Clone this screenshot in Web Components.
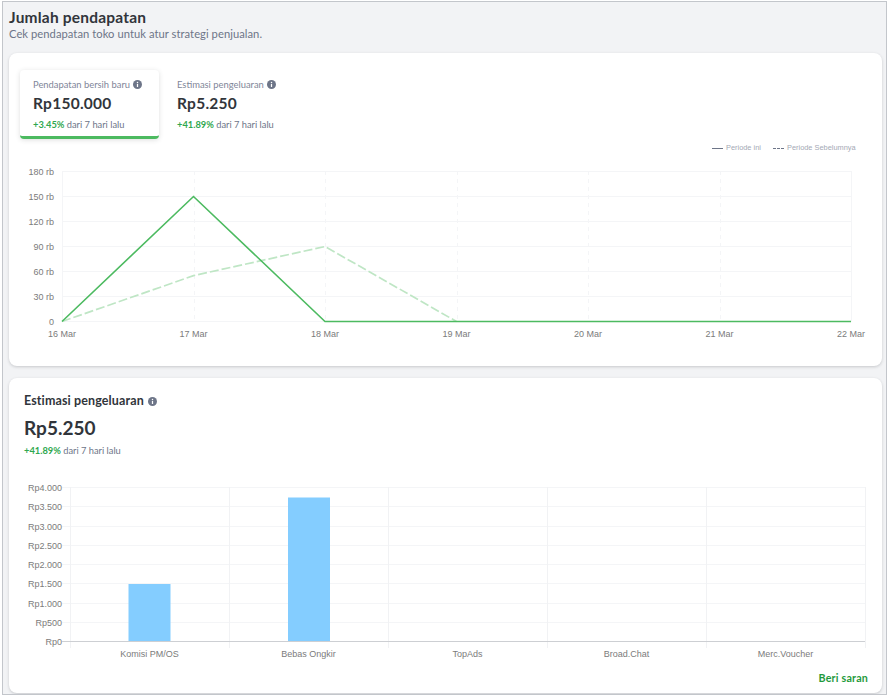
<!DOCTYPE html>
<html lang="id">
<head>
<meta charset="utf-8">
<title>Jumlah pendapatan</title>
<style>
    html, body { margin: 0; padding: 0; background: #fff; }
    body { font-family: "Noto Sans", "Open Sans", sans-serif; }
</style>
</head>
<body>

<template id="income-page-template">
    <style>
        :host {
            display: block;
            box-sizing: border-box;
            width: 885px;
            height: 694px;
            margin: 1px 0 0 2px;
            padding: 7px 4px 0 6px;
            background: #f2f3f5;
            border: 1px solid #c3c6cb;
            overflow: hidden;
        }
        h1 { margin: 0; font-size: 15.5px; line-height: 16px; font-weight: 700; color: #31353b; font-family: "Lato", sans-serif; letter-spacing: .2px; }
        p { margin: 1px 0 0; font-size: 11.2px; line-height: 15px; color: #6d7588; font-family: "Lato", sans-serif; letter-spacing: .05px; }
        .cards { display: flex; flex-direction: column; gap: 12px; margin-top: 12px; }
    </style>
    <h1><slot name="title"></slot></h1>
    <p><slot name="subtitle"></slot></p>
    <div class="cards"><slot></slot></div>
</template>

<template id="white-card-template">
    <style>
        :host {
            display: block;
            box-sizing: border-box;
            background: #fff;
            border-radius: 8px;
            box-shadow: 0 1px 3px rgba(49, 53, 59, .22);
        }
    </style>
    <slot></slot>
</template>

<template id="info-dot-template">
    <style>
        :host { display: inline-flex; vertical-align: -1px; margin-left: 1px; }
        svg { display: block; width: var(--dot-size, 9px); height: var(--dot-size, 9px); }
    </style>
    <svg viewBox="0 0 16 16"><circle cx="8" cy="8" r="8" fill="#6d7588"/><rect x="6.9" y="7" width="2.2" height="5.4" fill="#fff"/><circle cx="8" cy="4.6" r="1.3" fill="#fff"/></svg>
</template>

<template id="delta-line-template">
    <style>
        :host { display: block; font-family: "Lato", sans-serif; font-size: 9.3px; line-height: 12px; color: #6d7588; white-space: nowrap; }
        b { color: #2fa84f; font-weight: 700; }
    </style>
    <b><slot></slot></b> dari 7 hari lalu
</template>

<template id="metric-tab-template">
    <style>
        :host {
            display: block;
            box-sizing: border-box;
            width: 139px;
            height: 69px;
            padding: 9px 0 0 13px;
            font-family: "Lato", sans-serif;
            border-radius: 4px;
        }
        :host([active]) {
            box-shadow: 0 1px 5px rgba(49, 53, 59, .16);
            border-bottom: 3px solid #4cba60;
        }
        .label { font-size: 9.4px; line-height: 12px; color: #7f8699; white-space: nowrap; }
        .value { margin-top: 2px; font-size: 15.5px; line-height: 20px; font-weight: 700; color: #31353b; letter-spacing: .25px; }
        delta-line { margin-top: 6px; }
    </style>
    <div class="label"><slot name="label"></slot> <info-dot></info-dot></div>
    <div class="value"><slot name="value"></slot></div>
    <delta-line><slot name="delta"></slot></delta-line>
</template>

<template id="line-chart-template">
    <style>
        :host { display: block; }
        svg { display: block; }
        text { font-family: "Liberation Sans", Arial, sans-serif; font-size: 9px; fill: #7b7b7b; }
        .legend { font-size: 7.4px; fill: #a4a9b5; }
    </style>
    <svg id="plot" width="873" height="227" viewBox="9 139 873 227"></svg>
</template>

<template id="bar-chart-template">
    <style>
        :host { display: block; }
        svg { display: block; }
        text { font-family: "Liberation Sans", Arial, sans-serif; font-size: 9px; fill: #7b7b7b; }
    </style>
    <svg id="plot" width="873" height="190" viewBox="9 480 873 190"></svg>
</template>

<template id="income-summary-template">
    <style>
        :host { display: block; height: 313px; padding: 17px 0 0 11px; box-sizing: border-box; }
        .tabs { display: flex; gap: 5px; }
        line-chart { margin-left: -11px; }
    </style>
    <div class="tabs"><slot></slot></div>
    <line-chart></line-chart>
</template>

<template id="expense-detail-template">
    <style>
        :host { display: block; height: 315px; padding: 16px 0 0 15px; box-sizing: border-box; font-family: "Lato", sans-serif; position: relative; }
        h2 { margin: 0; font-size: 12.5px; line-height: 14px; font-weight: 700; color: #31353b; letter-spacing: .12px; }
        .value { margin-top: 8px; font-size: 19px; line-height: 24px; font-weight: 700; color: #31353b; }
        delta-line { margin-top: 5px; }
        bar-chart { margin: 23px 0 0 -15px; }
        a { position: absolute; right: 14px; bottom: 8px; font-size: 10.7px; line-height: 14px; font-weight: 700; color: #1f9a3c; letter-spacing: .2px; text-decoration: none; }
    </style>
    <h2><slot name="title"></slot> <info-dot></info-dot></h2>
    <div class="value"><slot name="value"></slot></div>
    <delta-line><slot name="delta"></slot></delta-line>
    <bar-chart></bar-chart>
    <a href="#"><slot name="link"></slot></a>
</template>

<script>
const SVG_NS = 'http://www.w3.org/2000/svg';

function svgEl(parent, tag, attrs, txt) {
    let el = document.createElementNS(SVG_NS, tag);
    for (let k in attrs) el.setAttribute(k, attrs[k]);
    if (txt !== undefined) el.textContent = txt;
    parent.appendChild(el);
    return el;
}

// every element just clones its template
class TemplateElement extends HTMLElement {
    constructor() {
        super();
        let tpl = document.getElementById(this.constructor.templateId);
        this.attachShadow({mode: 'open'}).appendChild(tpl.content.cloneNode(true));
    }
}

class IncomePage extends TemplateElement { static templateId = 'income-page-template'; }
class WhiteCard extends TemplateElement { static templateId = 'white-card-template'; }
class InfoDot extends TemplateElement { static templateId = 'info-dot-template'; }
class DeltaLine extends TemplateElement { static templateId = 'delta-line-template'; }
class MetricTab extends TemplateElement { static templateId = 'metric-tab-template'; }
class IncomeSummary extends TemplateElement { static templateId = 'income-summary-template'; }
class ExpenseDetail extends TemplateElement { static templateId = 'expense-detail-template'; }

class LineChart extends TemplateElement {
    static templateId = 'line-chart-template';
    connectedCallback() {
        if (this._drawn) return;
        this._drawn = true;
        let svg = this.shadowRoot.querySelector('#plot');
        let x0 = 62, x1 = 851, y0 = 321.5, stepY = 25;
        let stepX = (x1 - x0) / 6;
        let yLabels = ['0', '30 rb', '60 rb', '90 rb', '120 rb', '150 rb', '180 rb'];
        let days = ['16 Mar', '17 Mar', '18 Mar', '19 Mar', '20 Mar', '21 Mar', '22 Mar'];
        let y = v => y0 - v / 30000 * stepY;
        let x = i => x0 + i * stepX;

        yLabels.forEach((t, i) => {
            let py = y0 - i * stepY;
            svgEl(svg, 'line', {x1: x0, x2: x1, y1: py, y2: py, stroke: '#f4f5f7', 'stroke-width': 1});
            svgEl(svg, 'text', {x: 54, y: py + 3, 'text-anchor': 'end'}, t);
        });
        days.forEach((t, i) => {
            let px = Math.round(x(i)) + .5;
            svgEl(svg, 'line', {x1: px, x2: px, y1: 171, y2: y0,
                stroke: '#f4f5f7', 'stroke-width': 1, 'stroke-dasharray': i === 0 || i === 6 ? '' : '4 4'});
            svgEl(svg, 'text', {x: x(i), y: 337, 'text-anchor': 'middle'}, t);
        });

        let prev = [0, 55000, 90000, 0, 0, 0, 0];
        let cur = [0, 150000, 0, 0, 0, 0, 0];
        let pts = a => a.map((v, i) => x(i) + ',' + y(v)).join(' ');
        // previous period stops at 19 Mar, the rest is hidden by the current line
        svgEl(svg, 'polyline', {points: pts(prev.slice(0, 4)), fill: 'none', stroke: '#bfe6c5', 'stroke-width': 1.7, 'stroke-dasharray': '9 3'});
        svgEl(svg, 'polyline', {points: pts(cur), fill: 'none', stroke: '#4cba60', 'stroke-width': 1.6});

        // legend
        svgEl(svg, 'line', {x1: 712, x2: 723, y1: 148.5, y2: 148.5, stroke: '#6d7588', 'stroke-width': 1});
        svgEl(svg, 'text', {x: 726, y: 150, class: 'legend'}, 'Periode ini');
        svgEl(svg, 'line', {x1: 773, x2: 784, y1: 148.5, y2: 148.5, stroke: '#6d7588', 'stroke-width': 1, 'stroke-dasharray': '3 1'});
        svgEl(svg, 'text', {x: 787, y: 150, class: 'legend'}, 'Periode Sebelumnya');
    }
}

class BarChart extends TemplateElement {
    static templateId = 'bar-chart-template';
    connectedCallback() {
        if (this._drawn) return;
        this._drawn = true;
        let svg = this.shadowRoot.querySelector('#plot');
        let x0 = 70, x1 = 865, y0 = 641, stepY = 19.25;
        let stepX = (x1 - x0) / 5;
        let yLabels = ['Rp0', 'Rp500', 'Rp1.000', 'Rp1.500', 'Rp2.000', 'Rp2.500', 'Rp3.000', 'Rp3.500', 'Rp4.000'];
        let names = ['Komisi PM/OS', 'Bebas Ongkir', 'TopAds', 'Broad.Chat', 'Merc.Voucher'];

        yLabels.forEach((t, i) => {
            let py = Math.round(y0 - i * stepY) + .5;
            if (i > 0) svgEl(svg, 'line', {x1: x0 - 8, x2: x1, y1: py, y2: py, stroke: '#f4f5f7', 'stroke-width': 1});
            svgEl(svg, 'text', {x: 62, y: py + 3, 'text-anchor': 'end'}, t);
        });
        for (let i = 0; i <= 5; i++) {
            let px = Math.round(x0 + i * stepX) + .5;
            svgEl(svg, 'line', {x1: px, x2: px, y1: 487, y2: 648, stroke: '#f1f2f4', 'stroke-width': 1});
        }
        svgEl(svg, 'rect', {x: 128.5, y: 584, width: 42, height: 57.5, fill: '#84cdff'});
        svgEl(svg, 'rect', {x: 288, y: 497.5, width: 42, height: 144, fill: '#84cdff'});
        svgEl(svg, 'line', {x1: x0 - 8, x2: x1, y1: 641.5, y2: 641.5, stroke: '#cdcfd3', 'stroke-width': 1});
        names.forEach((t, i) => {
            svgEl(svg, 'text', {x: x0 + (i + .5) * stepX, y: 657, 'text-anchor': 'middle'}, t);
        });
    }
}

customElements.define('income-page', IncomePage);
customElements.define('white-card', WhiteCard);
customElements.define('info-dot', InfoDot);
customElements.define('delta-line', DeltaLine);
customElements.define('metric-tab', MetricTab);
customElements.define('line-chart', LineChart);
customElements.define('bar-chart', BarChart);
customElements.define('income-summary', IncomeSummary);
customElements.define('expense-detail', ExpenseDetail);
</script>

<income-page>
    <span slot="title">Jumlah pendapatan</span>
    <span slot="subtitle">Cek pendapatan toko untuk atur strategi penjualan.</span>
    <white-card>
        <income-summary>
            <metric-tab active>
                <span slot="label">Pendapatan bersih baru</span>
                <span slot="value">Rp150.000</span>
                <span slot="delta">+3.45%</span>
            </metric-tab>
            <metric-tab>
                <span slot="label">Estimasi pengeluaran</span>
                <span slot="value">Rp5.250</span>
                <span slot="delta">+41.89%</span>
            </metric-tab>
        </income-summary>
    </white-card>
    <white-card>
        <expense-detail>
            <span slot="title">Estimasi pengeluaran</span>
            <span slot="value">Rp5.250</span>
            <span slot="delta">+41.89%</span>
            <span slot="link">Beri saran</span>
        </expense-detail>
    </white-card>
</income-page>
</body>
</html>
